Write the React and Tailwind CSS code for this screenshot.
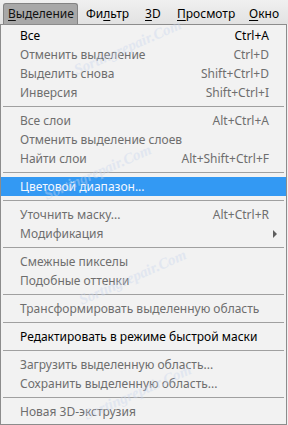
import React from 'react';

const bar = [
  { pre: '', u: 'В', post: 'ыделение', active: true },
  { pre: 'Фи', u: 'л', post: 'ьтр', w: 'w-[59px]' },
  { pre: '', u: '3', post: 'D', w: 'w-[32px]' },
  { pre: '', u: 'П', post: 'росмотр', w: 'w-[72px]' },
  { pre: '', u: 'О', post: 'кно', w: 'w-[36px]' },
];

// row: [label, shortcut, enabled, opts]; '-' = separator
const menu = [
  ['Все', 'Ctrl+A', true],
  ['Отменить выделение', 'Ctrl+D'],
  ['Выделить снова', 'Shift+Ctrl+D'],
  ['Инверсия', 'Shift+Ctrl+I'],
  '-',
  ['Все слои', 'Alt+Ctrl+A'],
  ['Отменить выделение слоев', ''],
  ['Найти слои', 'Alt+Shift+Ctrl+F'],
  '-',
  ['Цветовой диапазон...', '', true, 'hl'],
  '-',
  ['Уточнить маску...', 'Alt+Ctrl+R'],
  ['Модификация', '', false, 'sub'],
  '-',
  ['Смежные пикселы', ''],
  ['Подобные оттенки', ''],
  '-',
  ['Трансформировать выделенную область', ''],
  '-',
  ['Редактировать в режиме быстрой маски', '', true],
  '-',
  ['Загрузить выделенную область...', ''],
  ['Сохранить выделенную область...', ''],
  '-',
  ['Новая 3D-экструзия', ''],
];

const marks = [
  { top: 40, left: 70 },
  { top: 165, left: 40 },
  { top: 270, left: 75 },
  { top: 385, left: 80 },
];

export default function App() {
  return (
    <div className="relative w-[288px] h-[425px] overflow-hidden bg-[#f0f0f0] text-[12px] leading-none" style={{ fontFamily: "'Noto Sans', 'Open Sans', sans-serif" }}>
      {/* menu bar */}
      <div className="h-[24px] flex items-start pt-[3px] bg-gradient-to-b from-[#f0f0f0] to-[#e2e2e2]">
        {bar.map((b, i) => (
          <div key={i} className={
            b.active
              ? 'ml-[3px] mr-[8px] h-[21px] px-[4px] w-[75px] shrink-0 flex items-center rounded-t-[3px] border border-b-0 border-[#838383] bg-[#a8a8a8] text-[#111]'
              : `${b.w} shrink-0 h-[21px] flex items-center text-black whitespace-nowrap`
          }>
            <span>{b.pre}<span className="underline underline-offset-2">{b.u}</span>{b.post}</span>
          </div>
        ))}
      </div>

      {/* dropdown */}
      <div className="w-[287px] h-[401px] border border-[#8c8c8c] bg-[#f2f2f2] pt-[1px]">
        {menu.map((m, i) => {
          if (m === '-') {
            return (
              <div key={i} className="h-[9px] pt-[4px] px-[2px]">
                <div className="h-px bg-[#a0a0a0]" />
              </div>
            );
          }
          const [label, sc, on, opt] = m;
          const hl = opt === 'hl';
          return (
            <div key={i} className={
              hl
                ? 'h-[19px] flex items-center justify-between pl-[19px] pr-[17px] bg-[#3399f3] text-[#f4f8ff]'
                : on
                  ? 'h-[19px] flex items-center justify-between pl-[19px] pr-[17px] text-black'
                  : 'h-[19px] flex items-center justify-between pl-[19px] pr-[17px] text-[#6e6e6e]'
            }>
              <span>{label}</span>
              {opt === 'sub' ? (
                <svg width="5" height="8" viewBox="0 0 5 8" className="-mr-[9px]"><path d="M0 0 L4 4 L0 8 Z" fill="#5e5e5e" /></svg>
              ) : (
                <span>{sc}</span>
              )}
            </div>
          );
        })}
      </div>

      {/* faint watermark */}
      {marks.map((p, i) => (
        <div key={i} className="absolute pointer-events-none italic font-bold text-[15px] text-[#c9d6ee] opacity-40 -rotate-[24deg] whitespace-nowrap" style={{ top: p.top, left: p.left, fontFamily: "'Liberation Serif', serif" }}>
          Sortingrepair.Com
        </div>
      ))}
    </div>
  );
}
